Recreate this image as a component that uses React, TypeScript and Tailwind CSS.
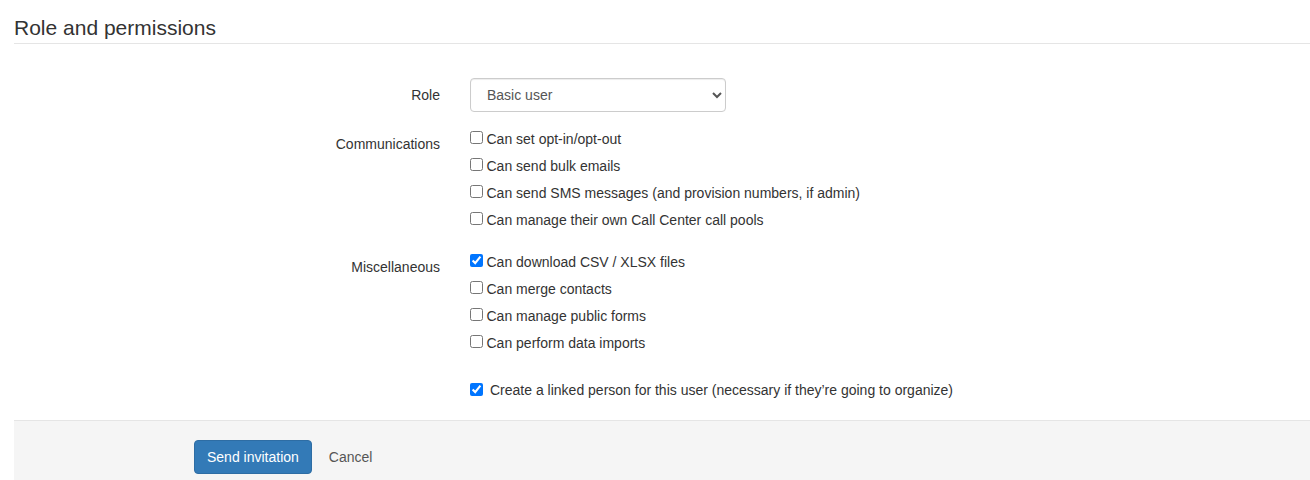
const font = "[font-family:'Liberation_Sans',Arial,sans-serif]";

function Check({ label, checked, className = "" }: { label: string; checked?: boolean; className?: string }) {
  return (
    <label className={`flex h-[27px] items-center ${className}`}>
      <input type="checkbox" defaultChecked={checked} className="m-0 h-[13px] w-[13px] shrink-0 -translate-y-[1px]" />
      <span className="ml-[3px] pl-[0.5px] text-[14px] leading-[20px] text-[#333]">{label}</span>
    </label>
  );
}

export default function App() {
  return (
    <div className={`h-[480px] w-[1310px] overflow-hidden bg-white pl-[14px] text-[14px] text-[#333] ${font}`}>
      <h3 className="mt-[14px] h-[30px] border-b border-[#e5e5e5] text-[21px] leading-[28px] text-[#333]">Role and permissions</h3>
      <div className="mt-[34px] flex h-[34px] items-center">
        <div className="w-[426px] text-right">Role</div>
        <select defaultValue="Basic user" className="ml-[30px] h-[34px] w-[256px] rounded-[4px] border border-[#ccc] bg-white px-[12px] text-[14px] text-[#555] shadow-[inset_0_1px_1px_rgba(0,0,0,0.075)]">
          <option>Basic user</option>
        </select>
      </div>
      <div className="mt-[13px] flex">
        <div className="w-[426px] pt-[9px] text-right leading-[20px]">Communications</div>
        <div className="ml-[30px]">
          <Check label="Can set opt-in/opt-out" />
          <Check label="Can send bulk emails" />
          <Check label="Can send SMS messages (and provision numbers, if admin)" />
          <Check label="Can manage their own Call Center call pools" />
        </div>
      </div>
      <div className="mt-[15px] flex">
        <div className="w-[426px] pt-[9px] text-right leading-[20px]">Miscellaneous</div>
        <div className="ml-[30px]">
          <Check label="Can download CSV / XLSX files" checked />
          <Check label="Can merge contacts" />
          <Check label="Can manage public forms" />
          <Check label="Can perform data imports" />
        </div>
      </div>
      <div className="ml-[456px] mt-[20px] flex h-[27px] items-center">
        <input type="checkbox" defaultChecked className="m-0 h-[13px] w-[13px]" />
        <span className="ml-[7px] leading-[20px]">Create a linked person for this user (necessary if they’re going to organize)</span>
      </div>
      <div className="mt-[17px] flex h-[60px] items-start border-t border-[#e5e5e5] bg-[#f5f5f5] pl-[180px] pt-[19px]">
        <button className="h-[34px] rounded-[4px] border border-[#2e6da4] bg-[#337ab7] px-[12px] text-[14px] leading-[20px] text-white">Send invitation</button>
        <span className="ml-[17px] leading-[34px] text-[#555]">Cancel</span>
      </div>
    </div>
  );
}
